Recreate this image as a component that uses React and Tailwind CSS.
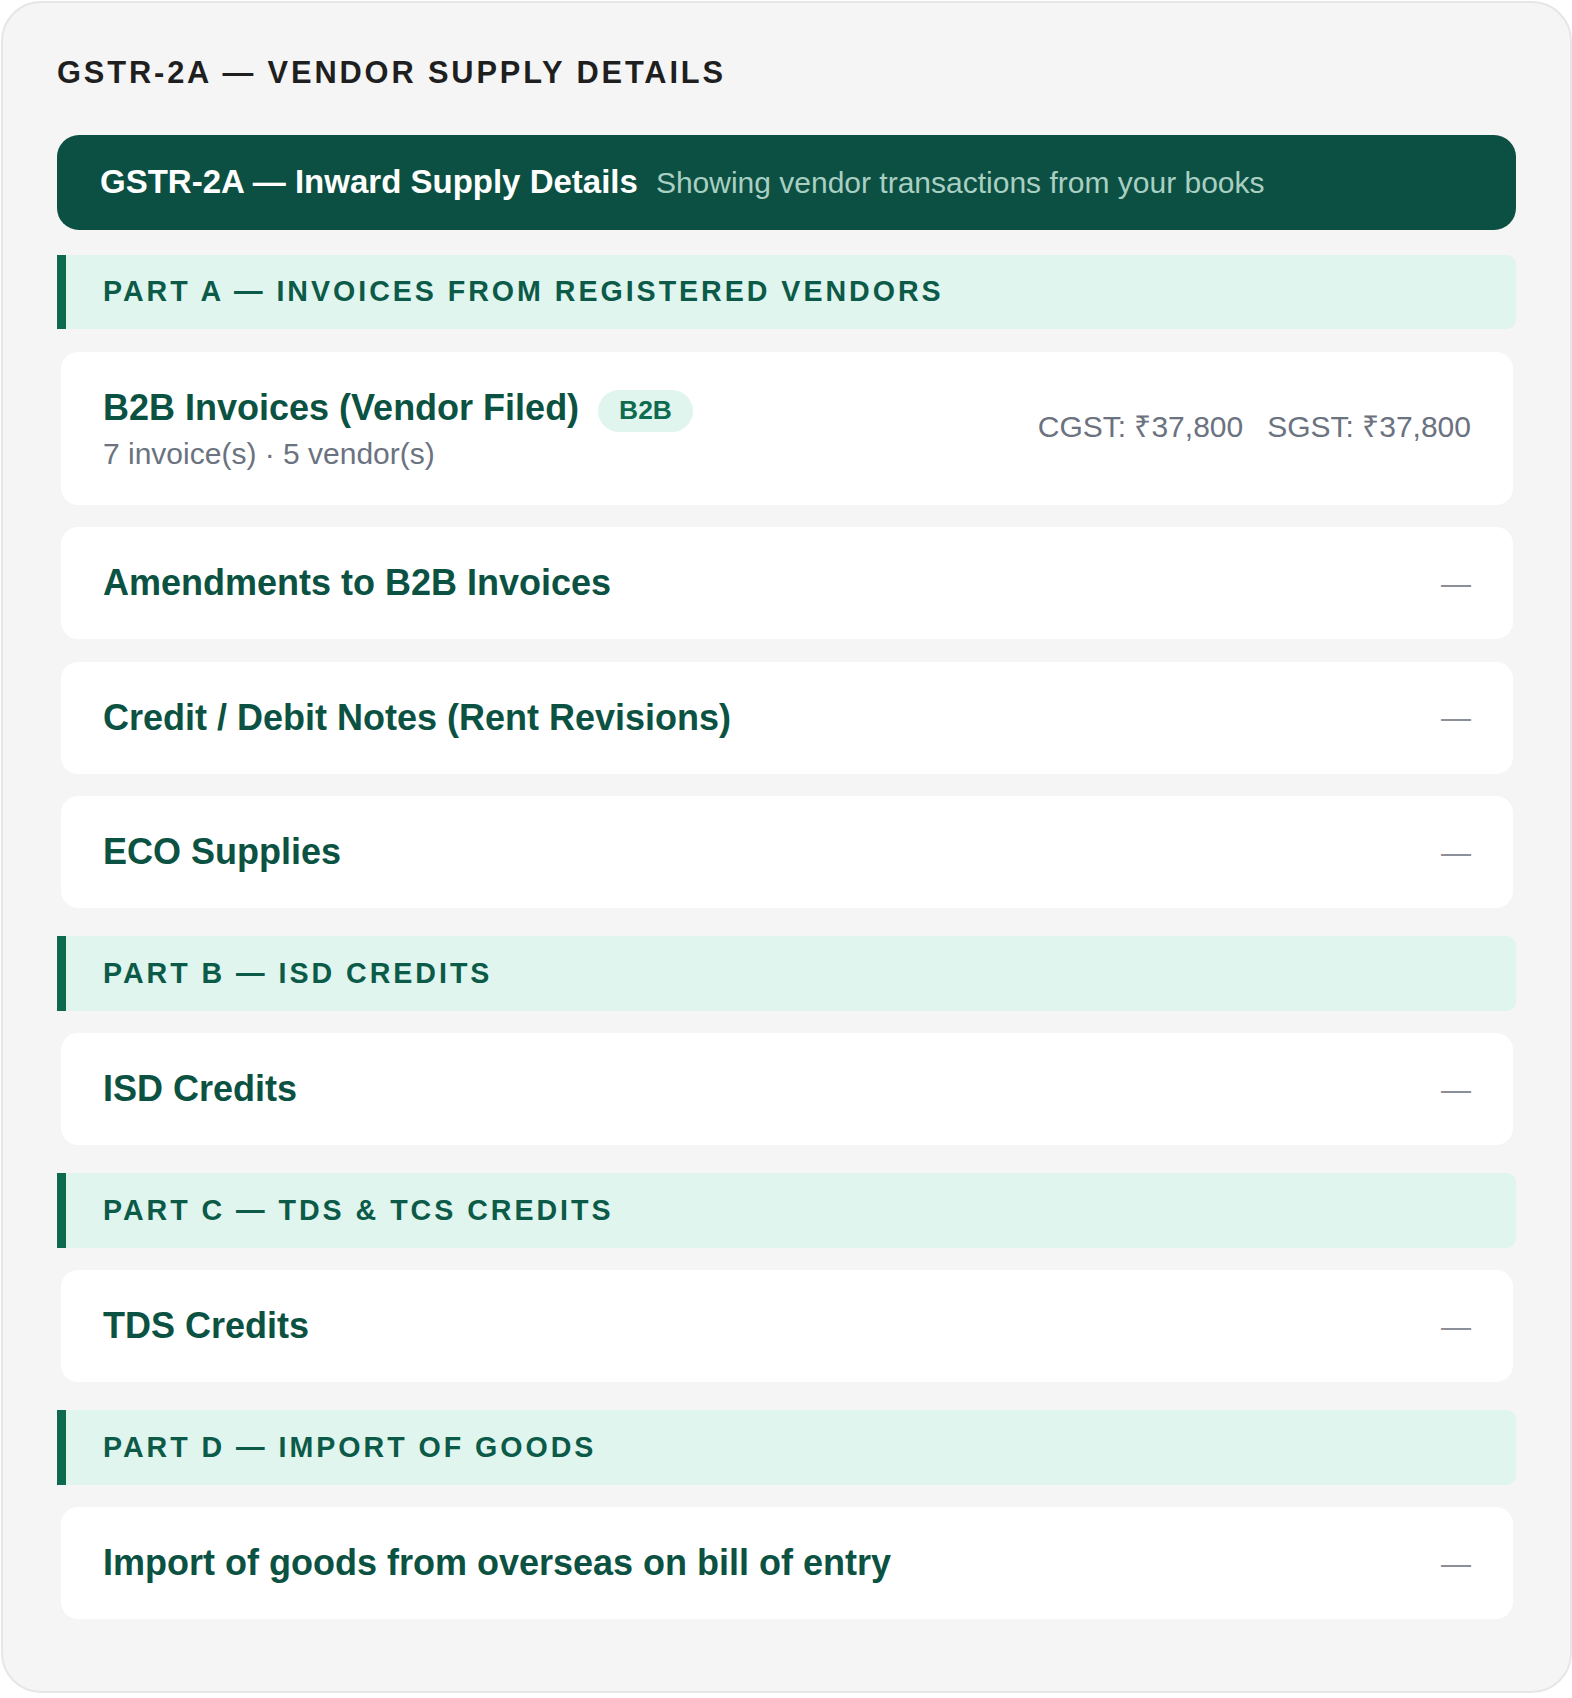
import React from "react";

const SECTIONS = [
  {
    label: "PART A — INVOICES FROM REGISTERED VENDORS",
    rows: [
      { title: "B2B Invoices (Vendor Filed)", badge: "B2B", sub: "7 invoice(s) · 5 vendor(s)", cgst: "₹37,800", sgst: "₹37,800" },
      { title: "Amendments to B2B Invoices" },
      { title: "Credit / Debit Notes (Rent Revisions)" },
      { title: "ECO Supplies" },
    ],
  },
  { label: "PART B — ISD CREDITS", rows: [{ title: "ISD Credits" }] },
  { label: "PART C — TDS & TCS CREDITS", rows: [{ title: "TDS Credits" }] },
  { label: "PART D — IMPORT OF GOODS", rows: [{ title: "Import of goods from overseas on bill of entry" }] },
];

const SectionLabel = ({ label, first }) => (
  <div className={`${first ? "mt-[2.5px]" : "mt-[5.5px]"} bg-[#e0f5ee] border-l-[9px] border-[#0e6a4f] rounded-r-[9px] pl-[37px] py-[15.8px]`}>
    <p className="text-[28.6px] leading-[1.5] font-bold tracking-[0.104em] text-[#0c5a48]">{label}</p>
  </div>
);

const Row = ({ r }) => {
  if (r.badge) {
    return (
      <div className="ml-[4px] mr-[3px] bg-white rounded-[17px] px-[42px] pt-[29.5px] pb-[32.5px] flex items-center justify-between">
        <div>
          <div className="flex items-center gap-[19px] h-[54px]">
            <h3 className="text-[36px] leading-[1.5] font-bold text-[#0b5242]">{r.title}</h3>
            <span className="bg-[#e0f5ee] text-[#0f6b50] text-[26.4px] font-bold leading-none rounded-full px-[21px] py-[7.8px] mt-[5px]">{r.badge}</span>
          </div>
          <p className="mt-[1px] text-[30px] leading-[1.2] text-[#6b7280]">{r.sub}</p>
        </div>
        <div className="flex gap-[24px] text-[30px] text-[#6b7280]">
          <span>CGST: {r.cgst}</span>
          <span>SGST: {r.sgst}</span>
        </div>
      </div>
    );
  }
  return (
    <div className="ml-[4px] mr-[3px] bg-white rounded-[17px] px-[42px] py-[29px] flex items-center justify-between">
      <h3 className="text-[36px] leading-[1.5] font-bold text-[#0b5242]">{r.title}</h3>
      <span className="text-[30px] text-[#8a8f98]">—</span>
    </div>
  );
};

export default function App() {
  return (
    <div className="pl-[1px] pt-[1px] bg-white" style={{ fontFamily: "'Liberation Sans', Arial, sans-serif" }}>
      <div className="bg-[#f5f5f5] border-2 border-[#e6e6e6] rounded-[40px] pl-[54px] pr-[54px] pt-[47px] pb-[72px]">
        <h1 className="text-[30.8px] leading-[1.5] font-bold tracking-[0.093em] text-[#1f1f1f] mb-[38.5px]">
          GSTR-2A — VENDOR SUPPLY DETAILS
        </h1>

        <div className="bg-[#0b5042] rounded-[22px] pl-[43px] pr-[40px] py-[22.75px] flex items-baseline gap-[18px]">
          <span className="text-[33px] leading-[1.5] font-bold text-white">GSTR-2A — Inward Supply Details</span>
          <span className="text-[30px] leading-[1.5] text-[#a9cfc2]">Showing vendor transactions from your books</span>
        </div>

        <div className="flex flex-col gap-[22.5px] mt-[22.5px]">
          {SECTIONS.map((s, i) => (
            <React.Fragment key={s.label}>
              <SectionLabel label={s.label} first={i === 0} />
              {s.rows.map((r) => (
                <Row key={r.title} r={r} />
              ))}
            </React.Fragment>
          ))}
        </div>
      </div>
    </div>
  );
}
